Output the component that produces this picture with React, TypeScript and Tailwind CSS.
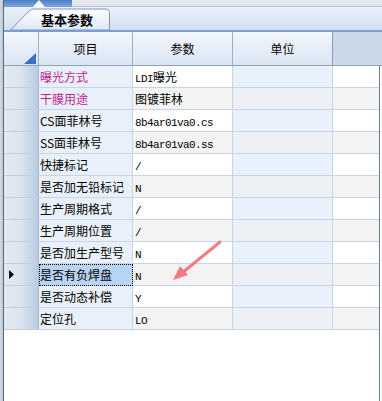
import React from 'react';

type Row = { name: string; value: string; magenta?: boolean };

const rows: Row[] = [
  { name: '曝光方式', value: 'LDI曝光', magenta: true },
  { name: '干膜用途', value: '图镀菲林', magenta: true },
  { name: 'CS面菲林号', value: '8b4ar01va0.cs' },
  { name: 'SS面菲林号', value: '8b4ar01va0.ss' },
  { name: '快捷标记', value: '/' },
  { name: '是否加无铅标记', value: 'N' },
  { name: '生产周期格式', value: '/' },
  { name: '生产周期位置', value: '/' },
  { name: '是否加生产型号', value: 'N' },
  { name: '是否有负焊盘', value: 'N' },
  { name: '是否动态补偿', value: 'Y' },
  { name: '定位孔', value: 'LO' },
];

const SELECTED = 9;

const cjk = "font-['Noto_Sans_CJK_SC','Noto_Sans',sans-serif]";
const mono = "font-['Liberation_Mono',monospace]";

// ascii runs in a fixed-width face, CJK runs at normal size
function Value({ text }: { text: string }) {
  const parts = text.match(/[\x00-\x7f]+|[^\x00-\x7f]+/g) || [];
  return (
    <>
      {parts.map((p, i) =>
        /^[\x00-\x7f]+$/.test(p) ? (
          <span key={i} className={`${mono} text-[11px] tracking-[-0.6px]`}>{p}</span>
        ) : (
          <span key={i} className={`${cjk} text-[12px]`}>{p}</span>
        )
      )}
    </>
  );
}

export default function App() {
  return (
    <div className={`w-[382px] h-[401px] flex bg-white overflow-hidden ${cjk}`}>
      {/* left splitter bar */}
      <div className="w-[4px] h-full bg-gradient-to-r from-[#d6dde6] to-[#b9c4d2] border-r border-[#5d6b80]" />

      <div className="flex-1 flex flex-col relative">
        {/* top strip */}
        <div className="h-[7px] flex">
          <div className="w-[68px] bg-gradient-to-b from-[#4f7fc4] to-[#7ea6dc] flex justify-center">
            <svg width="12" height="7" viewBox="0 0 12 7" className="ml-[2px]">
              <polygon points="6,0 12,7 0,7" fill="#ffffff" />
            </svg>
          </div>
          <div className="flex-1 bg-[#e4e8ee] border-b border-[#b9c5d5]" />
        </div>

        {/* tab strip */}
        <div className="h-[23px] bg-gradient-to-b from-[#eaf0f9] to-[#d3dff0] relative">
          <svg width="104" height="23" viewBox="0 0 104 23" className="absolute left-[6px] top-0">
            <defs>
              <linearGradient id="tabg" x1="0" y1="0" x2="0" y2="1">
                <stop offset="0" stopColor="#ffffff" />
                <stop offset="1" stopColor="#dce7f6" />
              </linearGradient>
            </defs>
            <path d="M0.5,23 L19,4 Q21,2 24,2 L96,2 Q99.5,2 99.5,5.5 L99.5,23 Z" fill="url(#tabg)" stroke="#7f98bb" strokeWidth="1" />
          </svg>
          <div className="absolute left-[37px] top-[3px] text-[13px] font-bold leading-[20px] text-black">基本参数</div>
        </div>

        {/* grid */}
        <div className="border-t-2 border-[#7a9ed3]">
          {/* header */}
          <div className="h-[34px] flex bg-gradient-to-b from-[#f3f7fc] to-[#dae5f3] border-b border-[#8fa2bd] text-[12px] text-black">
            <div className="w-[35px] border-r border-[#9fb0c6] relative">
              <svg width="12" height="11" viewBox="0 0 12 11" className="absolute right-[2px] bottom-[1px]">
                <polygon points="12,0 12,11 0,11" fill="#3c70c6" />
              </svg>
            </div>
            <div className="w-[94px] border-r border-[#9fb0c6] flex items-center justify-center">项目</div>
            <div className="w-[100px] border-r border-[#9fb0c6] flex items-center justify-center">参数</div>
            <div className="w-[100px] border-r border-[#8b9cb5] flex items-center justify-center">单位</div>
            <div className="flex-1 bg-[#cbd8ea]" />
          </div>

          {/* body rows */}
          {rows.map((r, i) => {
            const alt = i % 2 === 1;
            const sel = i === SELECTED;
            return (
              <div key={r.name} className="h-[22px] flex text-[12px] leading-[21px]">
                <div className="w-[35px] bg-gradient-to-r from-[#e2e9f2] via-[#dbe4ef] to-[#b9cbe2] border-r border-[#a8b9cf] border-b border-b-[#c3cfdd] flex items-center pl-[5px]">
                  {sel && (
                    <svg width="5" height="9" viewBox="0 0 5 9">
                      <polygon points="0,0 5,4.5 0,9" fill="#000000" />
                    </svg>
                  )}
                </div>
                <div
                  className={`w-[94px] border-r border-b border-[#c6d4e7] pl-[1px] whitespace-nowrap overflow-hidden ${
                    sel ? 'bg-[#b8d4f3] outline outline-1 outline-dotted outline-black -outline-offset-1' : 'bg-[#e9f0f9]'
                  } ${r.magenta ? 'text-[#c01f8f]' : 'text-black'}`}
                >
                  {r.name}
                </div>
                <div className={`w-[100px] border-r border-b border-[#c6d4e7] pl-[2px] text-black whitespace-nowrap overflow-hidden ${alt ? 'bg-[#f3f3f3]' : 'bg-white'}`}>
                  <Value text={r.value} />
                </div>
                <div className={`w-[100px] border-r border-b border-[#c6d4e7] ${alt ? 'bg-[#edf1f6]' : 'bg-[#e8f1fc]'}`} />
                <div className={`flex-1 border-b border-[#c6d4e7] ${alt ? 'bg-[#f3f3f3]' : 'bg-white'}`} />
                <div className="w-[3px] border-l border-[#6a7e9a] bg-white" />
              </div>
            );
          })}
        </div>
        <div className="flex-1 flex">
          <div className="flex-1 bg-white" />
          <div className="w-[3px] border-l border-[#6a7e9a] bg-white" />
        </div>

        {/* red annotation arrow */}
        <svg width="60" height="50" viewBox="0 0 60 50" className="absolute left-[164px] top-[236px]">
          <line x1="52" y1="6" x2="14" y2="37" stroke="#f27c84" strokeWidth="3" strokeLinecap="round" />
          <polygon points="5,44 12,30 20,39" fill="#f27c84" />
        </svg>
      </div>
    </div>
  );
}
